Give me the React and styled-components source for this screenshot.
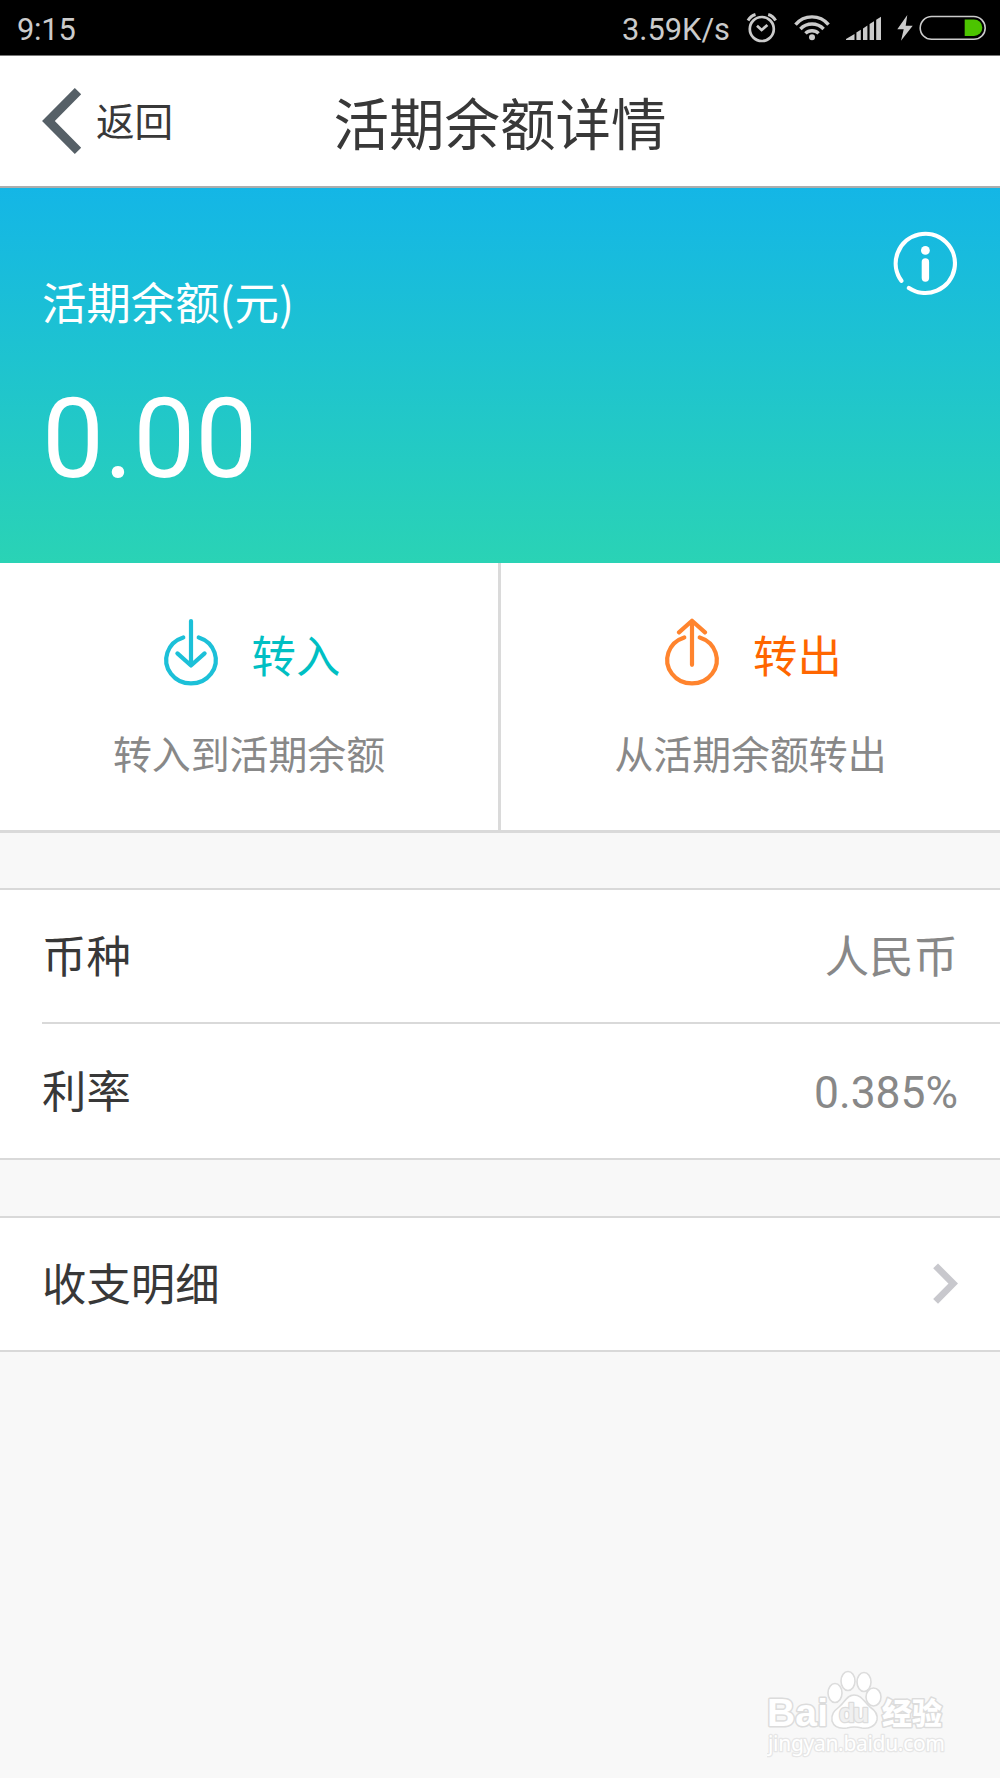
import React from 'react';
import styled, { createGlobalStyle, css } from 'styled-components';

// #region styles
const GlobalStyle = createGlobalStyle`
  *,
  *::before,
  *::after {
    box-sizing: border-box;
  }

  body {
    margin: 0;
    background-color: #f8f8f8;
    font-family: 'Noto Sans CJK SC', sans-serif;
    color: #383838;
  }

  svg {
    display: block;
    flex-shrink: 0;
  }
`;

const latin = css`
  font-family: Roboto, 'Noto Sans CJK SC', sans-serif;
`;

const Screen = styled.div`
  position: relative;
  width: 1000px;
  height: 1778px;
  overflow: hidden;
  background-color: #f8f8f8;
`;

const StatusBar = styled.div`
  ${latin};
  display: flex;
  align-items: center;
  height: 56px;
  padding: 3px 14px 0 17px;
  font-size: 30.8px;
  line-height: 34px;
  color: #cbcbcb;
  background-color: #000;
  border-bottom: 1px solid #777;
`;

const Time = styled.span`
  padding-top: 1px;
  letter-spacing: -0.2px;
`;

const Speed = styled.span`
  margin-left: auto;
  padding-top: 1px;
`;

const StatusIcons = styled.div`
  display: flex;
  gap: 16px;
  margin-left: 15px;
`;

const Power = styled.div`
  display: flex;
  gap: 6px;
`;

const Header = styled.header`
  display: grid;
  grid-template-columns: 1fr auto 1fr;
  align-items: center;
  height: 132px;
  padding: 0 42px 4px;
  background-color: #fff;
  border-bottom: 2px solid #adadad;
`;

const Back = styled.a`
  display: flex;
  align-items: center;
  gap: 14px;
  font-size: 38.6px;
  line-height: 60px;

  svg {
    margin-top: 4px;
  }
`;

const Title = styled.h1`
  margin: 0;
  padding-top: 3px;
  font-size: 55.5px;
  font-weight: 400;
  line-height: 80px;
`;

const Hero = styled.section`
  display: flex;
  justify-content: space-between;
  align-items: flex-start;
  height: 375px;
  padding: 43px 41px 0 42px;
  color: #fff;
  background: linear-gradient(#14b6e6, #2ad3b5);
`;

const Balance = styled.div`
  padding-top: 40px;
`;

const BalanceLabel = styled.div`
  font-size: 44.4px;
  line-height: 60px;
`;

const Amount = styled.div`
  ${latin};
  margin-top: 44px;
  font-size: 110.4px;
  line-height: 130px;
`;

const Actions = styled.section`
  display: grid;
  grid-template-columns: 498px 1fr;
  height: 270px;
  background-color: #fff;
  border-bottom: 3px solid #dadada;
`;

const Action = styled.div`
  display: flex;
  flex-direction: column;
  align-items: center;
  padding-top: 55px;

  & + & {
    border-left: 3px solid #dadada;
  }
`;

const ActionTitle = styled.div`
  display: flex;
  gap: 30px;
  font-size: 44.4px;
  line-height: 72px;
  color: ${props => props.$color};
`;

const ActionHint = styled.div`
  margin-top: 37px;
  font-size: 38.9px;
  line-height: 50px;
  color: #888;
`;

const List = styled.section`
  margin-top: 55px;
  background-color: #fff;
  border-top: 2px solid #d9d9d9;
  border-bottom: 2px solid #d9d9d9;

  & + & {
    margin-top: 56px;
  }
`;

const Row = styled.div`
  display: flex;
  justify-content: space-between;
  align-items: center;
  height: 132px;
  margin-left: 42px;
  padding-right: 42px;
  font-size: 44.4px;
  line-height: 60px;

  & + & {
    height: 136px;
    border-top: 2px solid #d9d9d9;
  }
`;

const Label = styled.span`
  padding-bottom: 5px;
`;

const Value = styled.span`
  padding-bottom: 5px;
  color: #888;
`;

const Rate = styled.span`
  ${latin};
  padding-top: 3px;
  color: #888;
`;

const Watermark = styled.svg`
  position: absolute;
  right: 49px;
  bottom: 18px;
`;
// #endregion

const AlarmIcon = () => (
  <svg width="33" height="34" fill="none" stroke="#cbcbcb">
    <circle cx="16.8" cy="17" r="12" strokeWidth="2.7" />
    <path d="M3 8.5Q5.5 4 10.5 2.5M30.6 8.5Q28.2 4 23.2 2.5" strokeWidth="3" />
    <path d="M12 13.8L16.6 18L22.4 13" strokeWidth="2.7" />
  </svg>
);

const WifiIcon = () => (
  <svg width="36" height="34" fill="none" stroke="#cbcbcb" strokeWidth="3.4">
    <path d="M1.5 12.6A21.5 21.5 0 0 1 34.5 12.6" />
    <path d="M6.4 17A16 16 0 0 1 29.6 17" />
    <path d="M11.4 21.4A9.5 9.5 0 0 1 24.6 21.4" />
    <circle cx="18" cy="25.2" r="3" fill="#cbcbcb" stroke="none" />
  </svg>
);

const SignalIcon = () => (
  <svg width="35" height="34" fill="#cbcbcb">
    <path d="M0 28V27L8.5 22V28Z" />
    <path d="M10.4 28V20.6L14.8 17.8V28Z" />
    <path d="M17 28V16.4L21.4 13.6V28Z" />
    <path d="M23.6 28V12L28 9.2V28Z" />
    <path d="M30.2 28V7.8L35 4.8V28Z" />
  </svg>
);

const BoltIcon = () => (
  <svg width="16" height="34" fill="#cbcbcb">
    <path d="M10.3 3L.3 17.3H6.7L4 28.7L15.7 13.7H8.7Z" />
  </svg>
);

const BatteryIcon = () => (
  <svg width="67" height="34">
    <rect
      x="1.2"
      y="4.5"
      width="65"
      height="22.8"
      rx="11.4"
      fill="none"
      stroke="#cbcbcb"
      strokeWidth="1.6"
    />
    <path d="M45.7 7.4H55A8.3 8.3 0 0 1 55 24H45.7Z" fill="#4cc400" />
  </svg>
);

const BackIcon = () => (
  <svg width="40" height="66" fill="none" stroke="#566067" strokeWidth="9">
    <path d="M36 3.2L6.4 33L36 62.8" />
  </svg>
);

const InfoIcon = () => (
  <svg width="66" height="66" fill="none" stroke="#fff" strokeLinecap="round">
    <path d="M8.4 49.8A29.6 29.6 0 1 1 15.9 57" strokeWidth="4.2" />
    <path d="M32.4 31V47" strokeWidth="7.4" />
    <circle cx="32.4" cy="19.4" r="4.4" fill="#fff" stroke="none" />
  </svg>
);

const TransferIcon = ({ stroke, children }) => (
  <svg
    width="64"
    height="68"
    viewBox="-1 0 64 68"
    fill="none"
    stroke={stroke}
    strokeWidth="4.2"
    strokeLinecap="round"
    strokeLinejoin="round"
  >
    <path d="M24.3 19.4A24.8 23.6 0 1 0 39.7 19.4" />
    {children}
  </svg>
);

const InIcon = () => (
  <TransferIcon stroke="#1cc0d8">
    <path d="M32 3V47.5M18.4 35.4L32 47.5L45.6 35.4" />
  </TransferIcon>
);

const OutIcon = () => (
  <TransferIcon stroke="#ff842e">
    <path d="M32 46.8V2.8M19 14.4L32 2.8L45 14.4" />
  </TransferIcon>
);

const MoreIcon = () => (
  <svg width="26" height="42" fill="none" stroke="#c8c8cd" strokeWidth="6.8">
    <path d="M3.6 2.8L21.2 20.6L3.6 38.4" />
  </svg>
);

const toes = [
  [68, 25, 7, 9.5],
  [81, 13, 7, 9.5],
  [97, 14, 7, 9.5],
  [106.5, 29, 7.5, 9]
];

const BaiduMark = () => (
  <Watermark
    width="184"
    height="92"
    fill="#fff"
    stroke="#dcdcdc"
    strokeWidth="1.6"
    strokeLinejoin="round"
  >
    {toes.map(([cx, cy, rx, ry]) => (
      <ellipse key={cx} cx={cx} cy={cy} rx={rx} ry={ry} />
    ))}
    <path d="M87 27C95 27 97 34 103 39C109 43 111 47 110 52C108 59 101 61 95 60Q87 58 80 60C73 61 67 59 65 53C64 46 67 43 72 39C78 34 80 27 87 27Z" />
    <g
      fontFamily="'Liberation Sans', sans-serif"
      fontWeight="700"
      paintOrder="stroke"
    >
      <text x="0" y="58" fontSize="39" textLength="61" strokeWidth="3">
        Bai
      </text>
      <text
        x="72"
        y="54"
        fontSize="26"
        textLength="30"
        fill="#f0f0f0"
        strokeWidth="2.5"
      >
        du
      </text>
    </g>
    <text
      x="115"
      y="56"
      fontFamily="'Noto Sans CJK SC', sans-serif"
      fontSize="30"
      fontWeight="900"
      paintOrder="stroke"
      strokeWidth="3"
    >
      经验
    </text>
    <text
      x="1"
      y="83"
      fontFamily="'Noto Sans', sans-serif"
      fontSize="21"
      textLength="177"
      stroke="#e6e6e6"
      strokeWidth="2.5"
      paintOrder="stroke"
    >
      jingyan.baidu.com
    </text>
  </Watermark>
);

const App = () => (
  <Screen>
    <GlobalStyle />
    <StatusBar>
      <Time>9:15</Time>
      <Speed>3.59K/s</Speed>
      <StatusIcons>
        <AlarmIcon />
        <WifiIcon />
        <SignalIcon />
        <Power>
          <BoltIcon />
          <BatteryIcon />
        </Power>
      </StatusIcons>
    </StatusBar>

    <Header>
      <Back>
        <BackIcon />
        返回
      </Back>
      <Title>活期余额详情</Title>
    </Header>

    {/* Balance */}
    <Hero>
      <Balance>
        <BalanceLabel>活期余额(元)</BalanceLabel>
        <Amount>0.00</Amount>
      </Balance>
      <InfoIcon />
    </Hero>

    {/* Transfer in / out */}
    <Actions>
      <Action>
        <ActionTitle $color="#00bfc3">
          <InIcon />
          转入
        </ActionTitle>
        <ActionHint>转入到活期余额</ActionHint>
      </Action>
      <Action>
        <ActionTitle $color="#ff6600">
          <OutIcon />
          转出
        </ActionTitle>
        <ActionHint>从活期余额转出</ActionHint>
      </Action>
    </Actions>

    <List>
      <Row>
        <Label>币种</Label>
        <Value>人民币</Value>
      </Row>
      <Row>
        <Label>利率</Label>
        <Rate>0.385%</Rate>
      </Row>
    </List>

    <List>
      <Row>
        <Label>收支明细</Label>
        <MoreIcon />
      </Row>
    </List>

    <BaiduMark />
  </Screen>
);

export default App;
